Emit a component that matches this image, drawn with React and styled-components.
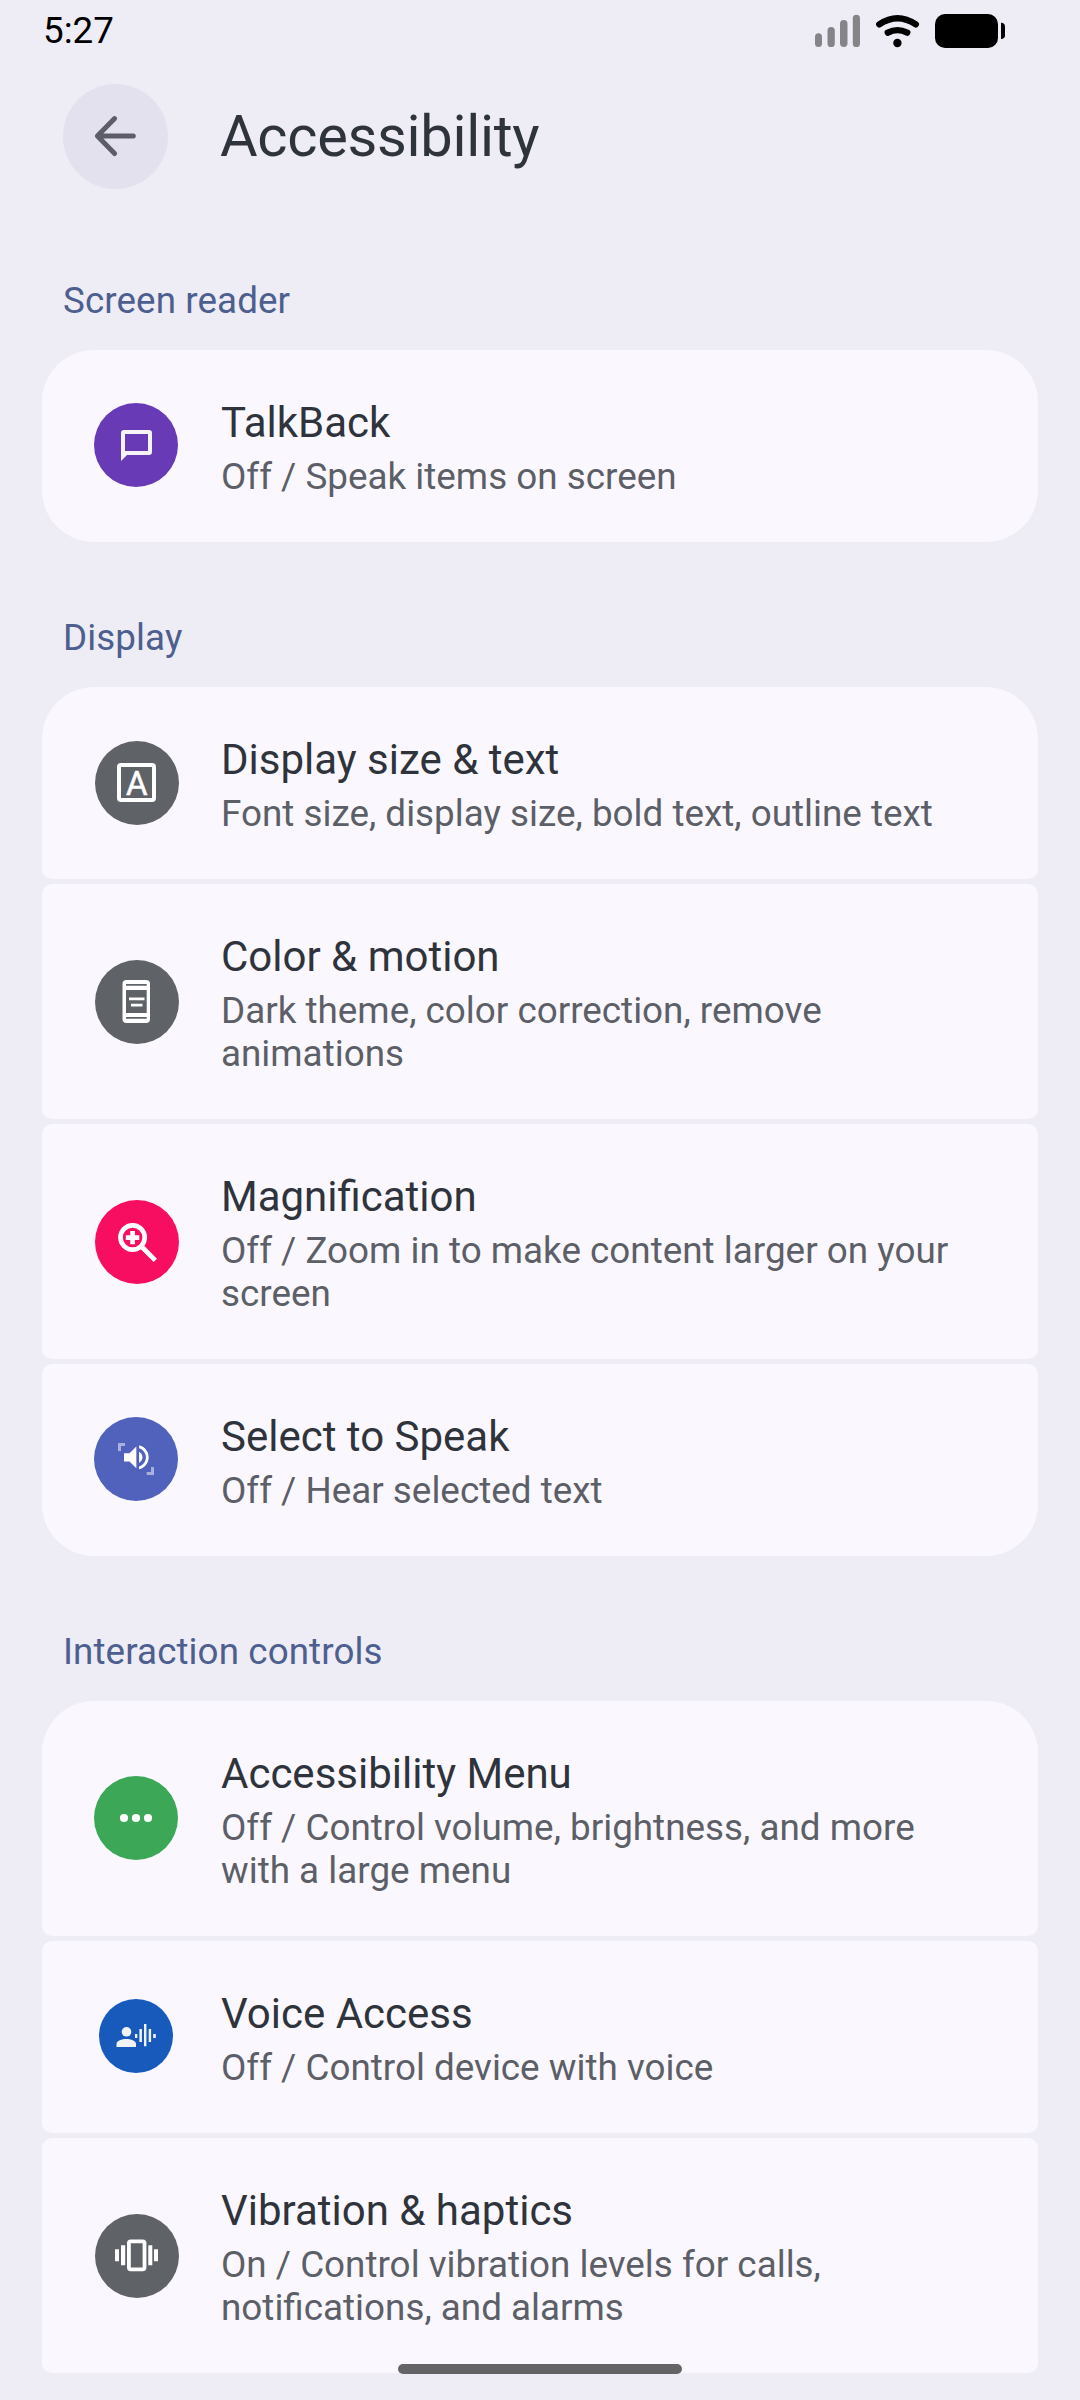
import React from "react";
import styled, { createGlobalStyle } from "styled-components";

const GlobalStyle = createGlobalStyle`
  * { box-sizing: border-box; }
  body {
    margin: 0;
    background: #eeecf5;
    font-family: Roboto, "Noto Sans", sans-serif;
  }
`;

const Screen = styled.div`
  position: relative;
  width: 1080px;
  height: 2400px;
  overflow: hidden;
  background: #eeecf5;
`;

const StatusBar = styled.div`
  display: flex;
  align-items: center;
  justify-content: space-between;
  height: 62px;
  padding: 0 75px 0 43px;
`;

const Clock = styled.span`
  margin-top: -2px;
  font-size: 36.75px;
  line-height: 43px;
  color: #000;
`;

const StatusIcons = styled.svg`
  display: block;
  width: 190px;
  height: 62px;
`;

const AppBar = styled.header`
  display: flex;
  align-items: center;
  gap: 52px;
  height: 105px;
  margin: 22px 0 0 63px;
`;

const BackButton = styled.button`
  display: flex;
  width: 105px;
  height: 105px;
  padding: 0;
  border: 0;
  border-radius: 50%;
  background: #e2e1ed;
`;

const PageTitle = styled.h1`
  margin: 0 0 2px;
  font-size: 57.75px;
  font-weight: 400;
  line-height: 68px;
  letter-spacing: -0.3px;
  color: #2f333b;
`;

const Content = styled.main`
  display: flex;
  flex-direction: column;
  gap: 74px;
  padding: 90px 42px 0;
`;

const SectionTitle = styled.h2`
  margin: 0 0 28px 21px;
  font-size: 36.75px;
  font-weight: 400;
  line-height: 43px;
  letter-spacing: 0.1px;
  color: #4c5f8f;
`;

const CardList = styled.div`
  display: flex;
  flex-direction: column;
  gap: 5px;
`;

const Card = styled.div`
  display: flex;
  align-items: center;
  height: ${(p) => (p.$lines === 2 ? 235 : 192)}px;
  padding-left: 52px;
  border-radius: ${(p) => (p.$first ? "52px 52px" : "10px 10px")}
    ${(p) => (p.$last ? "52px 52px" : "10px 10px")};
  background: #faf8fe;
`;

const Badge = styled.svg`
  display: block;
  flex: none;
  width: 84px;
  height: 84px;
  margin: ${(p) => p.$top || 0}px ${(p) => (p.$inset ? 42 : 43)}px 0
    ${(p) => (p.$inset ? 1 : 0)}px;
`;

const Texts = styled.div`
  display: flex;
  flex-direction: column;
  gap: 8px;
  width: 760px;
  padding-top: 4px;
`;

const ItemTitle = styled.span`
  font-size: 42px;
  line-height: 49px;
  font-variant-ligatures: common-ligatures;
  color: #2f333b;
`;

const Summary = styled.span`
  font-size: 36.85px;
  line-height: 43px;
  color: #5c5f67;
`;

const NavHandle = styled.div`
  position: absolute;
  left: 398px;
  bottom: 26px;
  width: 284px;
  height: 10px;
  border-radius: 5px;
  background: #646467;
`;

const glyphs = {
  talkback: (
    <path
      fill="#f5f3f7"
      fillRule="evenodd"
      d="M30 27H55A3 3 0 0 1 58 30V49A3 3 0 0 1 55 52H33L27 58V30A3 3 0 0 1 30 27ZM31 31V48H54V31Z"
    />
  ),
  text: (
    <>
      <rect x="24" y="24" width="35" height="35" rx="2" fill="none" stroke="#fff" strokeWidth="4" />
      <text x="41.7" y="53.5" fontSize="33" fontWeight="400" textAnchor="middle" fill="#fff" stroke="#fff" strokeWidth="0.5">
        A
      </text>
    </>
  ),
  color: (
    <>
      <rect x="27.5" y="20" width="27.5" height="43" rx="4" fill="#fff" />
      <path
        fill="#5f6368"
        d="M31 24h20.7v1.8H31zM31 30h20.7v23H31zM31 57h20.7v1.8H31z"
      />
      <path fill="#fff" d="M34 37.6h15.5v2.7H34zM36 43.7h11.5v2.7H36z" />
    </>
  ),
  magnify: (
    <g fill="none" stroke="#fff" strokeWidth="4.7">
      <circle cx="37.6" cy="37.5" r="12.1" />
      <path d="M46.5 46.5L60.3 60.3M37.6 31v13.2M30.8 37.6h13.5" />
    </g>
  ),
  speak: (
    <>
      <path
        fill="#fff"
        fillOpacity="0.5"
        d="M24 26h7v3h-4v5h-3zM60 58h-7.3v-3H57v-5h3z"
      />
      <path
        fill="#fff"
        transform="translate(25.9 23.9) scale(1.37)"
        d="M3 9v6h4l5 5V4L7 9H3zm13.5 3c0-1.77-1.02-3.29-2.5-4.03v8.05c1.48-.73 2.5-2.25 2.5-4.02zM14 3.23v2.06c2.89.86 5 3.54 5 6.71s-2.11 5.85-5 6.71v2.06c4.01-.91 7-4.49 7-8.77s-2.99-7.86-7-8.77z"
      />
    </>
  ),
  menu: (
    <g fill="#fff">
      <circle cx="30" cy="42" r="4.1" />
      <circle cx="42" cy="42" r="4.1" />
      <circle cx="54" cy="42" r="4.1" />
    </g>
  ),
  voice: (
    <g fill="#f1f3f4">
      <circle cx="32.5" cy="37.8" r="4.8" />
      <path d="M22.5 53V50C22.5 46.5 28 45 32.3 45S42 46.5 42 50V53Z" />
      <path d="M41 40h2.3v4H41zM45.4 35h2.5v13h-2.5zM50 30h2.4v22.3H50zM54.7 35h2.4v13h-2.4zM59.2 40h2.6v4h-2.6z" />
    </g>
  ),
  vibration: (
    <>
      <rect x="33.9" y="27.3" width="15.6" height="28" rx="1.8" fill="none" stroke="#fff" strokeWidth="3.8" />
      <path
        fill="#fff"
        d="M26 31.3h4.2v20H26zM20 35.3h4v12h-4zM53.3 31.3h4v20h-4zM59 35.3h4v12h-4z"
      />
    </>
  ),
};

const sections = [
  {
    title: "Screen reader",
    items: [
      { glyph: "talkback", color: "#683ab5", top: -2, title: "TalkBack", summary: ["Off / Speak items on screen"] },
    ],
  },
  {
    title: "Display",
    items: [
      { glyph: "text", color: "#5f6368", inset: true, title: "Display size & text", summary: ["Font size, display size, bold text, outline text"] },
      { glyph: "color", color: "#5f6368", inset: true, top: 1, title: "Color & motion", summary: ["Dark theme, color correction, remove", "animations"] },
      { glyph: "magnify", color: "#f80e60", inset: true, top: 1, title: "Magnification", summary: ["Off / Zoom in to make content larger on your", "screen"] },
      { glyph: "speak", color: "#5062bc", top: -2, title: "Select to Speak", summary: ["Off / Hear selected text"] },
    ],
  },
  {
    title: "Interaction controls",
    items: [
      { glyph: "menu", color: "#3ba757", top: -1, title: "Accessibility Menu", summary: ["Off / Control volume, brightness, and more", "with a large menu"] },
      { glyph: "voice", color: "#185abc", top: -2, radius: 37, title: "Voice Access", summary: ["Off / Control device with voice"] },
      { glyph: "vibration", color: "#5f6368", inset: true, top: 1, middle: true, title: "Vibration & haptics", summary: ["On / Control vibration levels for calls,", "notifications, and alarms"] },
    ],
  },
];

function SettingRow({ item, first, last }) {
  return (
    <Card $lines={item.summary.length} $first={first} $last={last}>
      <Badge viewBox="0 0 84 84" $inset={item.inset} $top={item.top}>
        <circle cx="42" cy="42" r={item.radius || 42} fill={item.color} />
        {glyphs[item.glyph]}
      </Badge>
      <Texts>
        <ItemTitle>{item.title}</ItemTitle>
        <Summary>
          {item.summary.map((line, i) => (
            <React.Fragment key={line}>
              {i > 0 && <br />}
              {line}
            </React.Fragment>
          ))}
        </Summary>
      </Texts>
    </Card>
  );
}

export default function App() {
  return (
    <Screen>
      <GlobalStyle />
      <StatusBar>
        <Clock>5:27</Clock>
        <StatusIcons viewBox="815 0 190 62">
          <g fill="#858488">
            <rect x="815" y="33.3" width="7" height="13.7" rx="3.5" />
            <rect x="827.5" y="27" width="7.3" height="20" rx="3.6" />
            <rect x="840" y="20" width="7.5" height="27" rx="3.7" />
            <rect x="852.8" y="14.7" width="7.2" height="32.3" rx="3.6" />
          </g>
          <g fill="none" stroke="#000" strokeWidth="6.4" strokeLinecap="round">
            <path d="M879.3 24.3Q897.5 12 915.8 24.3" />
            <path d="M887.8 32.6Q897.4 27.6 907.2 32.6" />
          </g>
          <circle cx="897.4" cy="43" r="4.2" />
          <rect x="935" y="14" width="63" height="34" rx="10" />
          <path d="M1001 22.7C1003.5 22.7 1005 24 1005 26.5V35.2C1005 37.7 1003.5 39 1001 39Z" />
        </StatusIcons>
      </StatusBar>
      <AppBar>
        <BackButton aria-label="Back">
          <svg width="105" height="105" viewBox="0 0 105 105" fill="none" stroke="#5c5d68" strokeWidth="5" strokeLinecap="round" strokeLinejoin="round">
            <path d="M51.6 34.6L34.4 52.1L51.6 69.5M34.6 52.1H70.3" />
          </svg>
        </BackButton>
        <PageTitle>Accessibility</PageTitle>
      </AppBar>
      <Content>
        {sections.map((section) => (
          <section key={section.title}>
            <SectionTitle>{section.title}</SectionTitle>
            <CardList>
              {section.items.map((item, i) => (
                <SettingRow
                  key={item.title}
                  item={item}
                  first={i === 0}
                  last={i === section.items.length - 1 && !item.middle}
                />
              ))}
            </CardList>
          </section>
        ))}
      </Content>
      <NavHandle />
    </Screen>
  );
}
